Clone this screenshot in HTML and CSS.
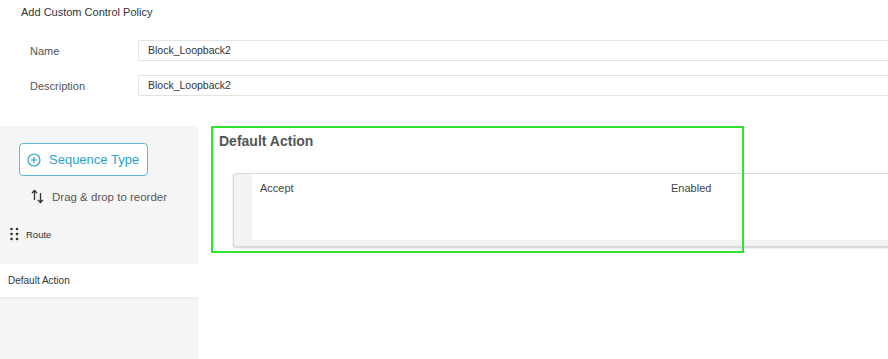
FILE: index.html
```html
<!DOCTYPE html>
<html lang="en">
<head>
  <meta charset="UTF-8" />
  <title>Add Custom Control Policy</title>
  <meta name="viewport" content="width=device-width, initial-scale=1.0" />
  <link rel="stylesheet" href="styles.css">
</head>
<body>

  <!-- Policy header -->
  <header class="page-title">Add Custom Control Policy</header>

  <section class="policy-form">
    <div class="form-row">
      <label>Name</label>
      <div class="field">Block_Loopback2</div>
    </div>
    <div class="form-row">
      <label>Description</label>
      <div class="field">Block_Loopback2</div>
    </div>
  </section>

  <div class="editor">
    <!-- Sequence list -->
    <aside class="sidebar">
      <button class="seq-btn">
        <svg width="14" height="14" viewBox="0 0 14 14">
          <circle cx="7" cy="7" r="6" fill="none" stroke="#2aa3c9" stroke-width="1.2"/>
          <path d="M7 4v6M4 7h6" stroke="#2aa3c9" stroke-width="1.2"/>
        </svg>
        Sequence Type
      </button>

      <div class="reorder">
        <svg width="13" height="15" viewBox="0 0 13 15">
          <path d="M3.5 11V1.5M1 4l2.5-2.5L6 4" fill="none" stroke="#333" stroke-width="1.3"/>
          <path d="M9.5 4v9.5M7 11l2.5 2.5L12 11" fill="none" stroke="#333" stroke-width="1.3"/>
        </svg>
        Drag &amp; drop to reorder
      </div>

      <div class="route">
        <svg width="9" height="14" viewBox="0 0 9 14">
          <circle cx="1.5" cy="2" r="1.3" fill="#333"/>
          <circle cx="7" cy="2" r="1.3" fill="#333"/>
          <circle cx="1.5" cy="7" r="1.3" fill="#333"/>
          <circle cx="7" cy="7" r="1.3" fill="#333"/>
          <circle cx="1.5" cy="12" r="1.3" fill="#333"/>
          <circle cx="7" cy="12" r="1.3" fill="#333"/>
        </svg>
        Route
      </div>

      <div class="seq-item">Default Action</div>
    </aside>

    <!-- Default action panel -->
    <main class="content">
      <h2>Default Action</h2>
      <div class="rule-card">
        <div class="rule-body">
          <span>Accept</span>
          <span>Enabled</span>
        </div>
      </div>
      <div class="highlight"></div>
    </main>
  </div>

</body>
</html>
```

FILE: styles.css
```css
body {
  font-family: "Liberation Sans", Arial, sans-serif;
  background-color: white;
  color: #444;
  margin: 0;
  padding: 0;
  width: 888px;
  height: 359px;
  overflow: hidden;
  display: flex;
  flex-direction: column;
}

.page-title {
  font-size: 11px;
  color: #333;
  padding: 6px 0 0 21px;
  line-height: 13px;
}

.policy-form {
  padding: 21px 0 0 30px;
  display: flex;
  flex-direction: column;
  gap: 14px;
}

.form-row {
  display: flex;
  align-items: center;
}

.form-row label {
  width: 108px;
  font-size: 11px;
  color: #555;
}

.field {
  flex: 1;
  height: 21px;
  margin-right: -20px;
  border: 1px solid #e2e2e2;
  border-radius: 2px;
  box-sizing: border-box;
  padding-left: 9px;
  font-size: 10.5px;
  line-height: 19px;
  color: #333;
}

.editor {
  flex: 1;
  display: flex;
  margin-top: 30px;
}

.sidebar {
  width: 198px;
  background-color: #f5f5f5;
  display: flex;
  flex-direction: column;
  padding-top: 17px;
}

.seq-btn {
  margin-left: 19px;
  width: 129px;
  height: 33px;
  background: white;
  border: 1px solid #5cb8d4;
  border-radius: 4px;
  color: #2aa3c9;
  font-family: inherit;
  font-size: 13px;
  display: flex;
  align-items: center;
  gap: 8px;
  padding: 0 0 0 7px;
  cursor: pointer;
}

.reorder {
  display: flex;
  align-items: center;
  gap: 8px;
  margin: 13px 0 0 31px;
  font-size: 11.5px;
  color: #555;
}

.route {
  display: flex;
  align-items: center;
  gap: 7px;
  margin: 23px 0 0 10px;
  font-size: 9.5px;
  color: #333;
}

.seq-item {
  margin-top: 23px;
  background: white;
  height: 33px;
  line-height: 33px;
  padding-left: 8px;
  font-size: 10px;
  color: #333;
  border-bottom: 2px solid #ececec;
}

.content {
  flex: 1;
  position: relative;
  padding: 0 0 0 21px;
}

.content h2 {
  margin: 7px 0 0;
  font-size: 14px;
  color: #555;
  line-height: 16px;
}

.rule-card {
  margin: 24px -20px 0 14px;
  height: 74px;
  box-sizing: border-box;
  background: #f3f3f3;
  border: 1px solid #dadada;
  border-radius: 3px;
  box-shadow: 0 1px 2px rgba(0, 0, 0, 0.2);
  padding: 0 0 6px 18px;
}

.rule-body {
  height: 100%;
  background: white;
  display: grid;
  grid-template-columns: 411px auto;
  padding: 8px 0 0 8px;
  box-sizing: border-box;
  font-size: 11px;
  color: #444;
}

/* annotation box drawn over the panel */
.highlight {
  position: absolute;
  left: 13px;
  top: 0;
  width: 533px;
  height: 127px;
  box-sizing: border-box;
  border: 2px solid #2ee62e;
}
```
